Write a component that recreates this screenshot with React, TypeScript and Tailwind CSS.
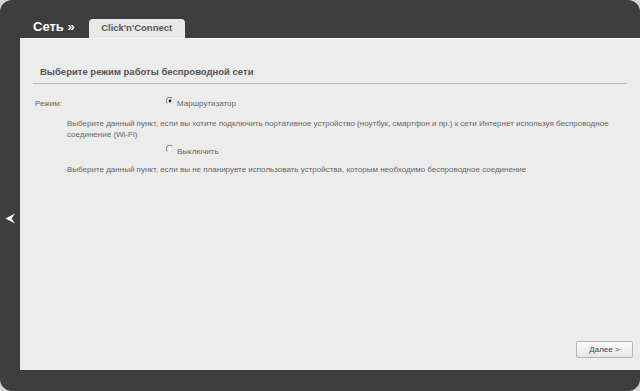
import React from 'react';

const Radio: React.FC<{ checked?: boolean }> = ({ checked }) => (
  <svg width="8" height="8" viewBox="0 0 8 8" className="shrink-0">
    <circle cx="4" cy="4" r="3.3" fill="#f4f4f4" />
    <path d="M1.2 6.2 A3.3 3.3 0 0 1 6.2 1.2" fill="none" stroke="#6a6a6a" strokeWidth="1" />
    <path d="M6.2 1.2 A3.3 3.3 0 0 1 1.2 6.2" fill="none" stroke="#d8d8d8" strokeWidth="0.8" />
    {checked && <circle cx="4" cy="4" r="1.4" fill="#1e1e1e" />}
  </svg>
);

const App: React.FC = () => {
  return (
    <div className="w-[640px] h-[391px] bg-[#d4d4d4] font-['Liberation_Sans',Arial,sans-serif]">
      <div className="w-full h-full bg-[#3e3e3e] rounded-[12px] flex flex-col">
        {/* Header */}
        <div className="h-[38px] flex items-end">
          <span className="ml-[33px] mb-[5px] text-white font-bold text-[13px] leading-none">Сеть »</span>
          <div className="ml-[14px] w-[96px] h-[19px] bg-[#e9e9e9] rounded-t-[4px] flex items-center justify-center text-[9.5px] font-bold text-[#555]">
            Click'n'Connect
          </div>
        </div>

        {/* Body */}
        <div className="flex h-[332px]">
          <div className="w-[20px] flex items-center justify-center pt-[28px]">
            <svg width="11" height="11" viewBox="0 0 11 11">
              <path d="M10 0.5 L0.5 5.5 L10 10.5 L6.5 5.5 Z" fill="#fff" />
            </svg>
          </div>
          <div className="flex-1 bg-[#ececec] border-t border-[#f7f7f7] flex flex-col">
            <div className="mx-[13px] mt-[26px] border-b border-[#b8b8b8] pb-[4px] pl-[7px] text-[9.5px] font-bold text-[#555] leading-[14px]">
              Выберите режим работы беспроводной сети
            </div>

            <div className="mt-[13px] text-[8px] text-[#666] leading-[11px]">
              <div className="flex items-start h-[14px] leading-[14px]">
                <span className="ml-[15px] w-[131px]">Режим:</span>
                <Radio checked />
                <span className="ml-[3px]">Маршрутизатор</span>
              </div>
              <div className="ml-[47px] mt-[7px] w-[550px]">
                Выберите данный пункт, если вы хотите подключить портативное устройство (ноутбук, смартфон и пр.) к сети Интернет используя беспроводное соединение (Wi-Fi)
              </div>
              <div className="flex items-start h-[14px] leading-[14px] mt-[5px]">
                <span className="ml-[146px]" />
                <Radio />
                <span className="ml-[3px]">Выключить</span>
              </div>
              <div className="ml-[47px] mt-[5px]">
                Выберите данный пункт, если вы не планируете использовать устройства, которым необходимо беспроводное соединение
              </div>
            </div>

            <div className="flex-1" />
            <div className="flex justify-end mr-[7px] mb-[12px]">
              <button className="w-[57px] h-[17px] bg-gradient-to-b from-[#fcfcfc] to-[#e6e6e6] border border-[#b4b4b4] rounded-[2px] text-[8px] text-[#444]">
                Далее &gt;
              </button>
            </div>
          </div>
        </div>
      </div>
    </div>
  );
};

export default App;
